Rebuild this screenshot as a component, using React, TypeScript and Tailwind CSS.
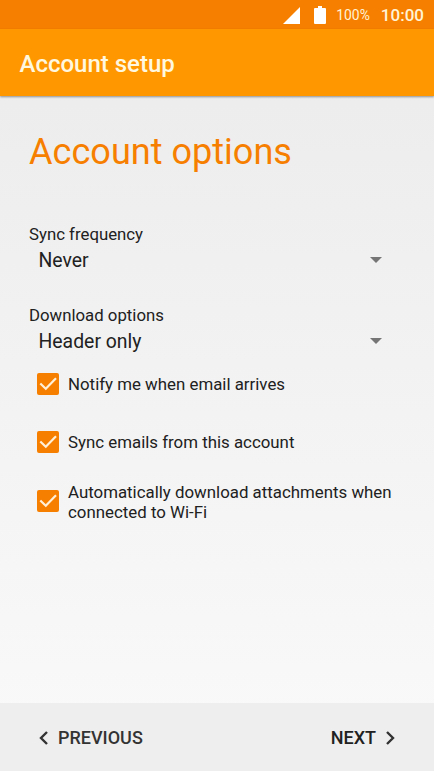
import React, { useState } from 'react';

const checkboxes = [
    { id: 'notify', label: 'Notify me when email arrives', spacing: 'h-[58px]', box: '' },
    { id: 'sync', label: 'Sync emails from this account', spacing: 'h-[58px]', box: '' },
    { id: 'attachments', label: 'Automatically download attachments when connected to Wi-Fi', spacing: 'h-[61px]', box: 'mb-0.5' },
];

export default function AccountSetup() {

    return (
        <main className="flex h-[771px] w-[434px] flex-col overflow-hidden bg-linear-to-b from-[#ebebeb] to-[#fafafa] font-[Roboto,sans-serif] text-[#212121]">
            <StatusBar />
            <header className="flex h-[67px] shrink-0 items-center bg-[#ff9800] pl-[19.5px] pt-[3px] shadow-[0_1px_2px_rgba(0,0,0,0.4)]">
                <h1 className="text-[24px] font-medium text-[#fff8e1]">Account setup</h1>
            </header>
            <AccountOptions />
            <BottomBar />
        </main>
    );
}


function StatusBar() {
    return (
        <div className="flex h-[29px] shrink-0 items-center justify-end bg-[#f77f00] pr-[10px] pt-px text-[#fff3d6]">
            <svg className="mr-[14px] h-[17px] w-[17px] text-white" viewBox="0 0 17 17" fill="currentColor">
                <path d="M17 0v17H0z" />
            </svg>
            <svg className="mr-[10px] h-[18px] w-[12px] text-white" viewBox="0 0 12 18" fill="currentColor">
                <path d="M4 0h4v2h3q1 0 1 1v14q0 1-1 1H1q-1 0-1-1V3q0-1 1-1h3z" />
            </svg>
            <span className="mr-[11px] text-[13.9px]">100%</span>
            <span className="pt-0.5 text-[17px] font-medium">10:00</span>
        </div>
    );
}


function AccountOptions() {
    return (
        <section className="flex-1 pl-[29px] pt-[33px]">
            <h2 className="text-[36.1px] leading-[46px] text-[#f77f00]">Account options</h2>
            <div className="pt-[49px]">
                <SelectField label="Sync frequency" value="Never" />
                <SelectField label="Download options" value="Header only" />
            </div>
            <div className="-mt-[31px]">
                {checkboxes.map((item) => (
                    <CheckRow key={item.id} label={item.label} spacing={item.spacing} box={item.box} />
                ))}
            </div>
        </section>
    );
}


function SelectField({ label, value }: { label: string; value: string }) {
    return (
        <div className="h-[81px]">
            <div className="text-[16.8px] leading-[21px]">{label}</div>
            <div className="flex h-[30px] items-center justify-between pl-[9.5px] pr-[52px]">
                <span className="pt-0.5 text-[19.4px] leading-[30px]">{value}</span>
                <svg className="h-[6px] w-[12px] text-[#757575]" viewBox="0 0 12 6" fill="currentColor">
                    <path d="M0 0h12L6 6z" />
                </svg>
            </div>
        </div>
    );
}


function CheckRow({ label, spacing, box }: { label: string; spacing: string; box: string }) {
    const [checked, setChecked] = useState(true);

    return (
        <button className={`flex w-full items-center pl-2 text-left ${spacing}`} onClick={() => setChecked(!checked)}>
            <svg className={`mr-[9px] h-[22px] w-[22px] shrink-0 ${box}`} viewBox="0 0 22 22" fill="none">
                <rect width="22" height="22" rx="2" fill={checked ? '#f77f00' : '#757575'} />
                {checked && <path d="M3.3 10.5l5.5 5.3L19 5.2" stroke="#fff0d8" strokeWidth="2.2" />}
            </svg>
            <span className="w-[335px] text-[16.85px] leading-5">{label}</span>
        </button>
    );
}


function BottomBar() {
    return (
        <footer className="flex h-[68px] shrink-0 items-center justify-between bg-[#eeeeee] pl-[39px] pr-[39px] pt-px text-lg font-medium">
            <button className="flex items-center gap-[10px] text-[#333333]">
                <svg className="h-[14px] w-[9px]" viewBox="0 0 9 14" fill="none" stroke="currentColor" strokeWidth="2.4">
                    <path d="M8 1L2 7l6 6" />
                </svg>
                PREVIOUS
            </button>
            <button className="flex items-center gap-[10px]">
                NEXT
                <svg className="h-[14px] w-[9px] text-[#333333]" viewBox="0 0 9 14" fill="none" stroke="currentColor" strokeWidth="2.4">
                    <path d="M1 1l6 6-6 6" />
                </svg>
            </button>
        </footer>
    );
}
